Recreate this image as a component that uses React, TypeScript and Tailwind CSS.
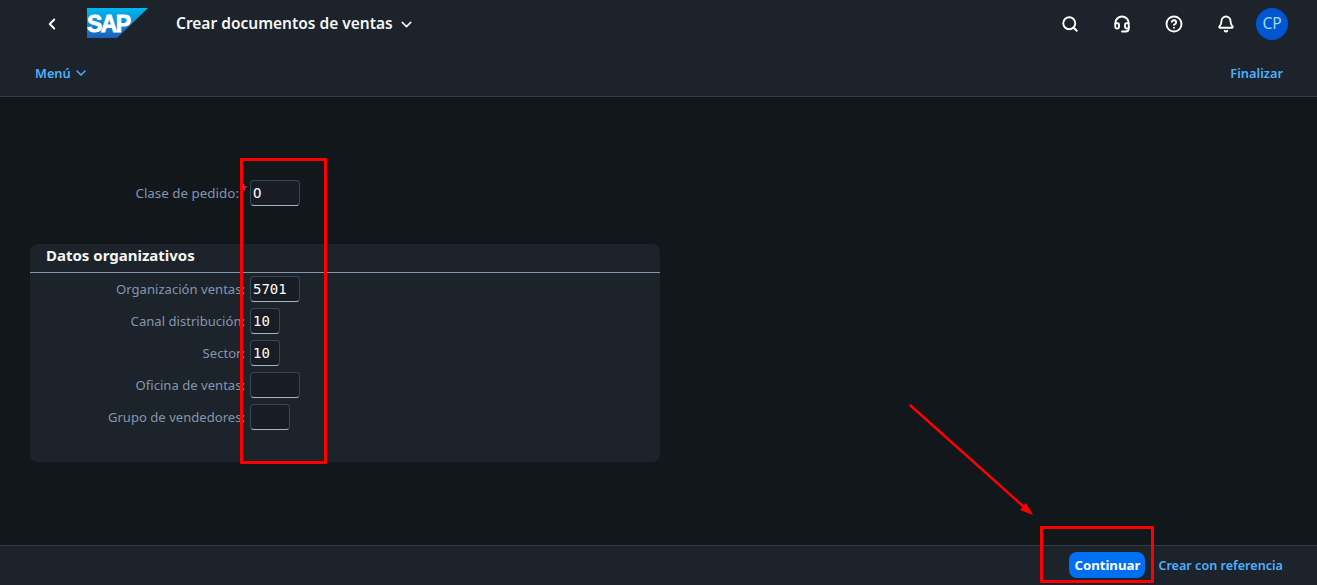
import { Search, Headset, CircleHelp, Bell, ChevronLeft, ChevronDown } from "lucide-react";

function Field({ label, value, w, labelW = "w-[215px]", star, labelSize = "text-[13.1px]" }: { label: string; value?: string; w: string; labelW?: string; star?: boolean; labelSize?: string }) {
  return (
    <div className="flex items-center h-[26px]">
      <div className={`${labelW} ${labelSize} relative text-right leading-[27px] text-[#8296b0] whitespace-nowrap`}>
        {label}
        {star && <span className="absolute right-[-8px] top-[-4px] text-[#ff3355] text-[14px]">*</span>}
      </div>
      <div className={`${w} ml-[5px] h-[26px] rounded-[4px] border border-[#3b4553] border-b-[#a9b4be] bg-[#181c24] pl-[2px] text-[14px] leading-[25px] text-white font-['DejaVu_Sans_Mono',monospace]`}>
        {value}
      </div>
    </div>
  );
}

export default function App() {
  return (
    <div className="relative flex h-[585px] w-[1317px] flex-col overflow-hidden bg-[#12171c] font-['Noto_Sans',sans-serif]">
      <header className="flex h-[97px] shrink-0 flex-col border-b border-[#333b47] bg-[#1d232a]">
        <div className="flex h-[48px] items-center pl-[43px] pr-[29px]">
          <ChevronLeft size={18} strokeWidth={2.5} className="text-white" />
          <svg width="62" height="31" viewBox="0 0 62 31" className="ml-[26px] mt-[-1px]">
            <defs>
              <linearGradient id="sapg" x1="0" y1="0" x2="0" y2="1">
                <stop offset="0" stopColor="#00b8f1" />
                <stop offset="1" stopColor="#1d5fb8" />
              </linearGradient>
            </defs>
            <polygon points="0,0 61,0 30,30 0,30" fill="url(#sapg)" />
            <text x="0" y="24" fontFamily="Liberation Sans" fontWeight="700" fontSize="23" letterSpacing="-1.6" fill="#fff" stroke="#fff" strokeWidth="0.8">SAP</text>
          </svg>
          <span className="ml-[27px] mt-[-1px] text-[15.5px] font-semibold text-[#f5f6f7]">Crear documentos de ventas</span>
          <ChevronDown size={17} strokeWidth={2.2} className="ml-[5px] text-[#f5f6f7]" />
          <div className="ml-auto flex items-center">
            <Search size={18} strokeWidth={2.5} className="text-white" />
            <Headset size={18} strokeWidth={2.5} className="ml-[34px] text-white" />
            <CircleHelp size={18} strokeWidth={2.5} className="ml-[34px] text-white" />
            <Bell size={18} strokeWidth={2.5} className="ml-[34px] text-white" />
            <div className="ml-[21px] flex h-[32px] w-[32px] items-center justify-center rounded-full bg-[#0057d2] text-[15.5px] text-[#a6d8ff]">CP</div>
          </div>
        </div>
        <div className="flex h-[48px] items-center pl-[35px] pr-[34px] pt-[3px] text-[12.8px] font-semibold text-[#4db1ff]">
          <span>Menú</span>
          <ChevronDown size={16} strokeWidth={2.2} className="ml-[2px] mt-[-1px]" />
          <span className="ml-auto">Finalizar</span>
        </div>
      </header>

      <main className="flex-1 pl-[30px]">
        <div className="pt-[83px]">
          <Field label="Clase de pedido:" value="O" w="w-[50px]" labelW="w-[209px] mr-[6px]" labelSize="text-[13.4px]" star />
        </div>
        <section className="mt-[38px] h-[218px] w-[630px] rounded-[8px] bg-[#1d232a]">
          <h2 className="h-[29px] border-b border-[#8396ad] pl-[16px] text-[15px] font-bold leading-[23px] text-[#f5f6f7]">Datos organizativos</h2>
          <div className="flex flex-col gap-[6px] pt-[3px]">
            <Field label="Organización ventas:" value="5701" w="w-[50px]" />
            <Field label="Canal distribución:" value="10" w="w-[30px]" />
            <Field label="Sector:" value="10" w="w-[30px]" />
            <Field label="Oficina de ventas:" w="w-[50px]" />
            <Field label="Grupo de vendedores:" w="w-[40px]" />
          </div>
        </section>
      </main>

      <footer className="flex h-[40px] shrink-0 items-center justify-end border-t border-[#333b47] bg-[#1d232a] pr-[34px]">
        <button className="mb-[1px] h-[26px] w-[76px] rounded-[8px] bg-[#0070f2] pt-[1px] text-[13.2px] font-bold text-white">Continuar</button>
        <span className="ml-[13px] mt-[1px] text-[12.6px] font-semibold text-[#4db1ff]">Crear con referencia</span>
      </footer>

      <div className="absolute left-[240px] top-[158px] h-[306px] w-[87px] rounded-[1px] border-[3px] border-[#ff0000]" />
      <div className="absolute left-[1040px] top-[526px] h-[57px] w-[114px] rounded-[1px] border-[3px] border-[#ff0000]" />
      <svg className="absolute left-[900px] top-[395px]" width="150" height="135" viewBox="0 0 150 135">
        <line x1="10.5" y1="10.5" x2="124" y2="112" stroke="#ff0000" strokeWidth="2.5" strokeLinecap="round" />
        <polygon points="133,120 120,115 126,108" fill="#ff0000" />
      </svg>
    </div>
  );
}
